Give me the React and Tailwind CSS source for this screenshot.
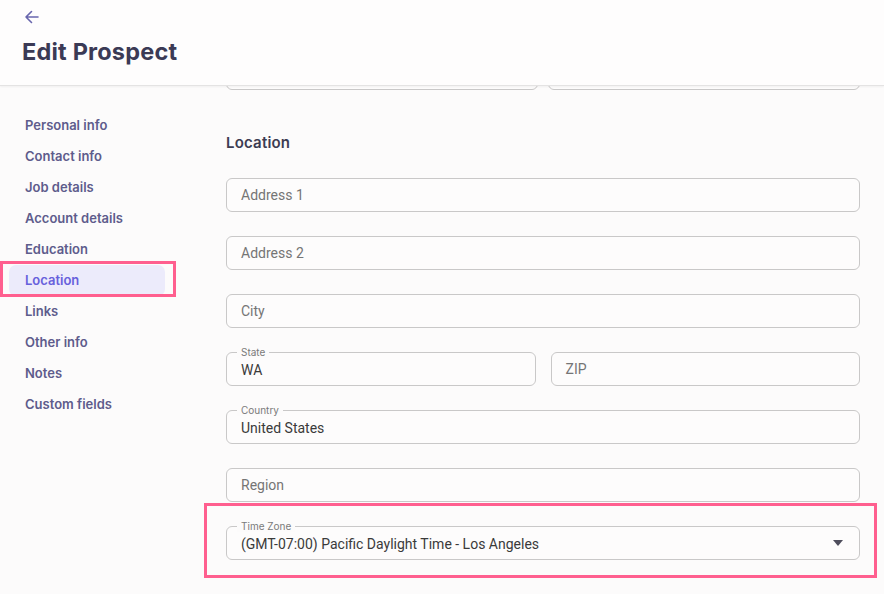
import React from "react";

const navItems = [
  "Personal info",
  "Contact info",
  "Job details",
  "Account details",
  "Education",
  "Location",
  "Links",
  "Other info",
  "Notes",
  "Custom fields",
];

function Field({ label, value, placeholder, select }) {
  return (
    <div className="relative h-[34px] rounded-[6px] border border-[#c9c8c8] bg-[#fdfcfc] flex items-center pl-[14px] pr-[14px]">
      {label && (
        <span className="absolute left-[10px] top-[-7px] px-[4px] bg-[#fcfbfb] text-[10px] leading-[12px] text-[#7a7a7a]">
          {label}
        </span>
      )}
      <span
        className={
          "flex-1 text-[14px] leading-[18px] " +
          (value ? "text-[#3a3a3a] pt-[1px]" : "text-[#757575]")
        }
        style={{ fontFamily: "Roboto, 'Liberation Sans', sans-serif" }}
      >
        {value || placeholder}
      </span>
      {select && (
        <svg width="12" height="8" viewBox="0 0 12 8" className="mr-[1px]">
          <path d="M1 1 L11 1 L6 7 Z" fill="#4e4d5c" />
        </svg>
      )}
    </div>
  );
}

export default function App() {
  return (
    <div
      className="relative w-[884px] h-[594px] overflow-hidden bg-[#fcfbfb]"
      style={{ fontFamily: "Inter, 'Noto Sans', sans-serif" }}
    >
      <header className="relative z-10 h-[86px] bg-[#fefdfd] border-b border-[#e4e3e3] shadow-[0_1px_2px_rgba(0,0,0,0.05)] pl-[22px]">
        <div className="pt-[10px] pl-[2px] h-[26px]">
          <svg width="15" height="14" viewBox="0 0 15 14" fill="none">
            <path
              d="M14 7H2M7.5 1.5L2 7l5.5 5.5"
              stroke="#6866ad"
              strokeWidth="1.6"
              strokeLinecap="round"
              strokeLinejoin="round"
            />
          </svg>
        </div>
        <h1 className="mt-[11px] text-[23.5px] leading-[30px] font-bold text-[#3b3a55] tracking-[0.2px]">
          Edit Prospect
        </h1>
      </header>

      <div className="flex h-[508px]">
        <nav className="w-[200px] shrink-0 pt-[24px] pl-[9px]">
          {navItems.map((item) => (
            <div
              key={item}
              className={
                "w-[156px] h-[31px] flex items-center pl-[16px] text-[13px] font-semibold rounded-[7px] " +
                (item === "Location"
                  ? "bg-[#ecebfb] text-[#6760dc]"
                  : "text-[#5e5c8c]")
              }
            >
              {item}
            </div>
          ))}
        </nav>

        <main className="flex-1 pl-[26px] pr-[24px] overflow-hidden">
          <div className="grid grid-cols-2 gap-[10px] mt-[-30px]">
            <Field placeholder="" />
            <Field placeholder="" />
          </div>
          <h2 className="mt-[43px] text-[15px] leading-[20px] font-semibold text-[#3d3c52] tracking-[0.2px]">
            Location
          </h2>
          <div className="mt-[25px] flex flex-col gap-[24px]">
            <Field placeholder="Address 1" />
            <Field placeholder="Address 2" />
            <Field placeholder="City" />
            <div className="grid grid-cols-2 gap-[15px]">
              <Field label="State" value="WA" />
              <Field placeholder="ZIP" />
            </div>
            <Field label="Country" value="United States" />
            <Field placeholder="Region" />
            <Field
              label="Time Zone"
              value="(GMT-07:00) Pacific Daylight Time - Los Angeles"
              select
            />
          </div>
        </main>
      </div>

      <div className="absolute left-[0px] top-[261px] w-[176px] h-[36px] border-[3px] border-[#ff5f8f] pointer-events-none" />
      <div className="absolute left-[204px] top-[503px] w-[673px] h-[75px] border-[3px] border-[#ff5f8f] pointer-events-none" />
    </div>
  );
}
